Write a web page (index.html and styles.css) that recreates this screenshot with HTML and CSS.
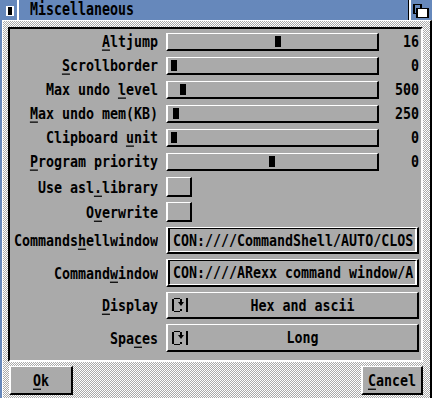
FILE: index.html
```html
<!DOCTYPE html>
<html lang="en">
<head>
    <meta charset="UTF-8">
    <meta name="viewport" content="width=device-width, initial-scale=1.0">
    <title>Miscellaneous</title>
    <link rel="stylesheet" href="styles.css">
</head>
<body>
    <div class="window">
        <div class="titlebar">
            <div class="close-gadget"><span class="close-icon"></span></div>
            <div class="title tall">Miscellaneous</div>
            <div class="depth-gadget">
                <svg width="21" height="20" viewBox="0 0 21 20">
                    <rect x="2" y="4" width="9" height="10" fill="#000"/>
                    <rect x="4" y="5" width="5" height="8" fill="#6688bb"/>
                    <rect x="5" y="8" width="13" height="10" fill="#000"/>
                    <rect x="7" y="9" width="9" height="8" fill="#fff"/>
                </svg>
            </div>
        </div>

        <div class="frame">
            <div class="inner">
                <div class="panel">
                    <div class="row slider-row">
                        <span class="label tall"><u>A</u>ltjump</span>
                        <div class="control">
                            <div class="slider"><div class="knob" style="left:107px"></div></div>
                            <span class="value tall">16</span>
                        </div>
                    </div>
                    <div class="row slider-row">
                        <span class="label tall"><u>S</u>crollborder</span>
                        <div class="control">
                            <div class="slider"><div class="knob" style="left:3px"></div></div>
                            <span class="value tall">0</span>
                        </div>
                    </div>
                    <div class="row slider-row">
                        <span class="label tall">Max undo <u>l</u>evel</span>
                        <div class="control">
                            <div class="slider"><div class="knob" style="left:12px"></div></div>
                            <span class="value tall">500</span>
                        </div>
                    </div>
                    <div class="row slider-row">
                        <span class="label tall"><u>M</u>ax undo mem(KB)</span>
                        <div class="control">
                            <div class="slider"><div class="knob" style="left:5px"></div></div>
                            <span class="value tall">250</span>
                        </div>
                    </div>
                    <div class="row slider-row">
                        <span class="label tall">Clipboard <u>u</u>nit</span>
                        <div class="control">
                            <div class="slider"><div class="knob" style="left:3px"></div></div>
                            <span class="value tall">0</span>
                        </div>
                    </div>
                    <div class="row slider-row">
                        <span class="label tall"><u>P</u>rogram priority</span>
                        <div class="control">
                            <div class="slider"><div class="knob" style="left:101px"></div></div>
                            <span class="value tall">0</span>
                        </div>
                    </div>

                    <div class="row check-row">
                        <span class="label tall">Use asl<u>.</u>library</span>
                        <div class="control"><div class="checkbox"></div></div>
                    </div>
                    <div class="row check-row">
                        <span class="label tall">O<u>v</u>erwrite</span>
                        <div class="control"><div class="checkbox"></div></div>
                    </div>

                    <div class="row string-row">
                        <span class="label tall">Commands<u>h</u>ellwindow</span>
                        <div class="string"><div class="string-field"><span class="tall">CON:////CommandShell/AUTO/CLOS</span></div></div>
                    </div>
                    <div class="row string-row tall-row">
                        <span class="label tall">Command<u>w</u>indow</span>
                        <div class="string"><div class="string-field"><span class="tall">CON:////ARexx command window/A</span></div></div>
                    </div>

                    <div class="row cycle-row">
                        <span class="label tall"><u>D</u>isplay</span>
                        <div class="cycle">
                            <svg class="cycle-icon" width="12" height="14" viewBox="0 0 12 14">
                                <rect x="2" y="0" width="6" height="1"/>
                                <rect x="0" y="1" width="2" height="12"/>
                                <rect x="2" y="13" width="6" height="1"/>
                                <rect x="8" y="1" width="2" height="3"/>
                                <polygon points="6,4 12,4 9,8"/>
                                <rect x="8" y="11" width="2" height="2"/>
                            </svg>
                            <span class="cycle-sep"></span>
                            <span class="cycle-text tall">Hex and ascii</span>
                        </div>
                    </div>
                    <div class="row cycle-row tall-row">
                        <span class="label tall">Spa<u>c</u>es</span>
                        <div class="cycle">
                            <svg class="cycle-icon" width="12" height="14" viewBox="0 0 12 14">
                                <rect x="2" y="0" width="6" height="1"/>
                                <rect x="0" y="1" width="2" height="12"/>
                                <rect x="2" y="13" width="6" height="1"/>
                                <rect x="8" y="1" width="2" height="3"/>
                                <polygon points="6,4 12,4 9,8"/>
                                <rect x="8" y="11" width="2" height="2"/>
                            </svg>
                            <span class="cycle-sep"></span>
                            <span class="cycle-text tall">Long</span>
                        </div>
                    </div>
                </div>

                <div class="buttons">
                    <div class="btn btn-ok"><span class="tall"><u>O</u>k</span></div>
                    <div class="btn btn-cancel"><span class="tall"><u>C</u>ancel</span></div>
                </div>
            </div>
        </div>
    </div>
</body>
</html>
```

FILE: styles.css
```css
body {
    margin: 0;
    background: #aaaaaa;
    font-family: "DejaVu Sans Mono", monospace;
    font-size: 13.3px;
    font-weight: bold;
    color: #000;
}

.tall {
    display: inline-block;
    transform: scaleY(1.25);
}

u {
    text-underline-offset: 2px;
    text-decoration-thickness: 1px;
}

.window {
    width: 432px;
    height: 398px;
    display: flex;
    flex-direction: column;
}

/* title bar */
.titlebar {
    height: 20px;
    background: #6688bb;
    display: flex;
}

.close-gadget {
    width: 17px;
    border-right: 2px solid #fff;
    display: flex;
    align-items: flex-start;
}

.close-icon {
    width: 4px;
    height: 8px;
    margin: 6px 0 0 6px;
    background: #000;
    border: 2px solid #fff;
    border-top-width: 1px;
    border-bottom-width: 1px;
}

.title {
    padding-left: 11px;
    line-height: 20px;
    transform: scaleY(1.3);
}

.depth-gadget {
    margin-left: auto;
    width: 21px;
    border-left: 2px solid #fff;
    box-shadow: -1px 0 0 #000;
}

.depth-gadget svg {
    display: block;
}

/* window frame */
.frame {
    flex: 1;
    display: flex;
    border-left: 2px solid #6688bb;
}

.inner {
    flex: 1;
    display: flex;
    flex-direction: column;
    border-top: 1px solid #fff;
    border-left: 1px solid #fff;
    border-right: 2px solid #000;
    border-bottom: 2px solid #000;
    padding: 6px 7px 5px 5px;
    background: repeating-conic-gradient(#aaaaaa 0 25%, #ffffff 0 50%) 0 0 / 2px 2px;
}

.panel {
    height: 327px;
    background: #aaaaaa;
    border: 2px solid;
    border-color: #000 #fff #fff #000;
    padding: 4px 2px 0 0;
    display: flex;
    flex-direction: column;
    gap: 5px;
}

.row {
    display: grid;
    grid-template-columns: 148px 253px;
    column-gap: 8px;
    align-items: center;
}

.label {
    text-align: right;
    white-space: nowrap;
}

.slider-row {
    height: 19px;
    align-items: start;
}

.slider-row .label {
    line-height: 18px;
}

.check-row {
    height: 20px;
}

.string-row,
.cycle-row {
    height: 27px;
}

.tall-row {
    height: 28px;
}

.control {
    display: flex;
    align-items: center;
}

/* slider */
.slider {
    position: relative;
    width: 209px;
    height: 15px;
    border-top: 1px solid #fff;
    border-left: 2px solid #fff;
    border-right: 2px solid #000;
    border-bottom: 2px solid #000;
}

.knob {
    position: absolute;
    top: 2px;
    width: 6px;
    height: 11px;
    background: #000;
}

.value {
    flex: 1;
    text-align: right;
    line-height: 18px;
}

/* checkbox */
.checkbox {
    width: 22px;
    height: 17px;
    border-top: 1px solid #fff;
    border-left: 2px solid #fff;
    border-right: 2px solid #000;
    border-bottom: 2px solid #000;
}

/* string gadget */
.string {
    height: 100%;
    box-sizing: border-box;
    border-top: 1px solid #fff;
    border-left: 2px solid #fff;
    border-right: 2px solid #000;
    border-bottom: 2px solid #000;
}

.string-field {
    height: 100%;
    box-sizing: border-box;
    border-top: 1px solid #000;
    border-left: 2px solid #000;
    border-right: 2px solid #fff;
    border-bottom: 1px solid #fff;
    padding-left: 3px;
    overflow: hidden;
    white-space: nowrap;
    display: flex;
    align-items: center;
}

/* cycle gadget */
.cycle {
    height: 100%;
    box-sizing: border-box;
    border-top: 1px solid #fff;
    border-left: 2px solid #fff;
    border-right: 2px solid #000;
    border-bottom: 2px solid #000;
    display: flex;
    align-items: center;
    padding-left: 4px;
}

.cycle-icon {
    fill: #000;
    display: block;
}

.cycle-sep {
    width: 2px;
    height: 14px;
    background: #000;
    margin-left: 2px;
}

.cycle-text {
    flex: 1;
    text-align: center;
}

/* buttons */
.buttons {
    margin-top: 4px;
    height: 29px;
    display: flex;
    justify-content: space-between;
    padding-left: 1px;
}

.btn {
    box-sizing: border-box;
    height: 29px;
    background: #aaaaaa;
    border-top: 1px solid #fff;
    border-left: 2px solid #fff;
    border-right: 2px solid #000;
    border-bottom: 2px solid #000;
    display: flex;
    align-items: center;
    justify-content: center;
}

.btn-ok {
    width: 64px;
}

.btn-cancel {
    width: 62px;
}
```
